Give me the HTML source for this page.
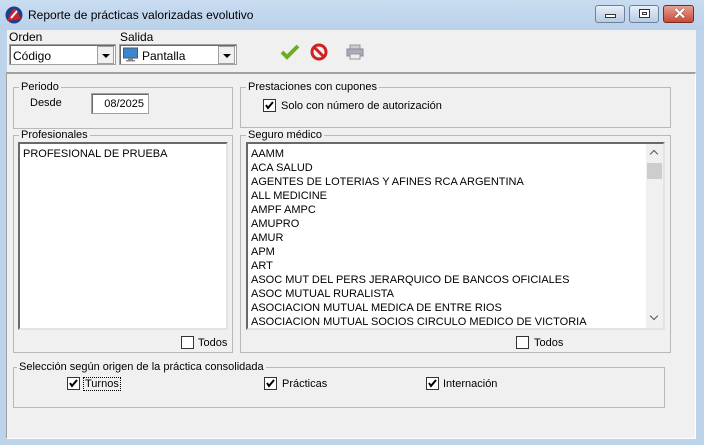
<!DOCTYPE html>
<html><head><meta charset="utf-8"><style>
*{margin:0;padding:0;box-sizing:border-box}
body{width:704px;height:445px;overflow:hidden;background:#bcd3ea;font-family:"Liberation Sans",Arial,sans-serif;font-size:11px;color:#000;position:relative}
.a{position:absolute}
.title{left:0;top:0;width:704px;height:30px;background:linear-gradient(#c9dcf0,#b9d1ea)}
.client{left:7px;top:30px;width:689px;height:408px;background:#f0f0f0}
.panel{left:6px;top:72px;width:690px;height:367px;border-top:2px solid #a0a0a0;border-left:1px solid #a0a0a0;border-bottom:1px solid #fff;border-right:1px solid #fff;background:#f0f0f0}
.grp{border:1px solid #b9b9b9}
.lbl{background:#f0f0f0;padding:0 2px;line-height:12px}
.cb{width:13px;height:13px;border:1px solid #333;background:#fff}
.list{background:#fff;border:2px solid;border-color:#696969 #e3e3e3 #e3e3e3 #696969}
.combo{background:#fff;border:1px solid #a0a0a0;box-shadow:inset 1px 1px 0 #696969}
.dd{width:17px;height:18px;background:#f0f0f0;border:1px solid #a0a0a0;top:1px;right:1px}
.dd::after{content:"";position:absolute;left:4px;top:7px;border-left:4px solid transparent;border-right:4px solid transparent;border-top:4px solid #000}
.wb{top:5px;height:18px;border:1px solid #6f819a;border-radius:3px;background:linear-gradient(#e6eef8,#b9cce3)}
.item{position:absolute;left:3px;line-height:14.1px;white-space:nowrap}
</style></head><body>
<div class="a title"></div>
<svg class="a" style="left:5px;top:6px" width="18" height="18" viewBox="0 0 18 18"><circle cx="9" cy="9" r="8.5" fill="#1c3f8f"/><path d="M2 15 L8 3 L11 3 L16 13 Z" fill="#d41f26"/><path d="M6 12 L12 5" stroke="#fff" stroke-width="2"/></svg>
<div class="a" style="left:28px;top:8px;font-size:12px">Reporte de prácticas valorizadas evolutivo</div>
<div class="a wb" style="left:595px;width:30px"><div class="a" style="left:9px;top:8px;width:11px;height:4px;background:#fff;border:1px solid #333"></div></div>
<div class="a wb" style="left:629px;width:30px"><div class="a" style="left:9px;top:3px;width:11px;height:9px;background:#fff;border:1px solid #333"><div class="a" style="left:2px;top:2px;width:5px;height:3px;border:1px solid #333"></div></div></div>
<div class="a wb" style="left:663px;width:31px;background:linear-gradient(#e8a090,#c74a36);border-color:#7a2b20"><div class="a" style="left:9px;top:-2px;color:#fff;font-size:16px;font-weight:bold;text-shadow:0 0 1px #000">✕</div></div>
<div class="a client"></div>
<div class="a" style="left:9px;top:30px;font-size:12px">Orden</div>
<div class="a combo" style="left:9px;top:44px;width:107px;height:21px"><div class="a" style="left:3px;top:4px;font-size:12px">Código</div><div class="a dd"></div></div>
<div class="a" style="left:120px;top:30px;font-size:12px">Salida</div>
<div class="a combo" style="left:119px;top:44px;width:118px;height:21px"><svg class="a" style="left:3px;top:2px" width="15" height="15"><rect x="0.5" y="1" width="14" height="10" fill="#3a86d0" stroke="#556"/><rect x="5" y="11" width="5" height="2" fill="#888"/><rect x="3" y="13" width="9" height="1.5" fill="#888"/></svg><div class="a" style="left:22px;top:4px;font-size:12px">Pantalla</div><div class="a dd"></div></div>
<svg class="a" style="left:280px;top:44px" width="20" height="16"><path d="M2 8 L7 13 L18 2" fill="none" stroke="#6ab01e" stroke-width="4"/></svg>
<svg class="a" style="left:310px;top:43px" width="18" height="18"><circle cx="9" cy="9" r="7" fill="none" stroke="#d02020" stroke-width="3"/><path d="M4 4 L14 14" stroke="#d02020" stroke-width="3"/></svg>
<svg class="a" style="left:346px;top:44px" width="18" height="16"><rect x="4" y="1" width="10" height="5" fill="#ccc" stroke="#999"/><rect x="1" y="5" width="16" height="7" fill="#aab" stroke="#889"/><rect x="4" y="10" width="10" height="5" fill="#eee" stroke="#999"/></svg>
<div class="a panel"></div>
<div class="a grp" style="left:13px;top:87px;width:220px;height:42px"></div>
<div class="a lbl" style="left:19px;top:81px">Periodo</div>
<div class="a" style="left:30px;top:97px">Desde</div>
<div class="a" style="left:91px;top:93px;width:58px;height:21px;background:#fff;border:1px solid #a0a0a0;box-shadow:inset 1px 1px 0 #696969"><div class="a" style="right:4px;top:4px">08/2025</div></div>
<div class="a grp" style="left:240px;top:87px;width:431px;height:41px"></div>
<div class="a lbl" style="left:246px;top:81px">Prestaciones con cupones</div>
<svg class="a" style="left:263px;top:99px" width="13" height="13"><rect x="0.5" y="0.5" width="12" height="12" fill="#fff" stroke="#333"/><path d="M3 6 L5 9 L10 3" fill="none" stroke="#000" stroke-width="2"/></svg>
<div class="a" style="left:281px;top:100px">Solo con número de autorización</div>
<div class="a grp" style="left:13px;top:135px;width:220px;height:218px"></div>
<div class="a lbl" style="left:19px;top:129px">Profesionales</div>
<div class="a list" style="left:18px;top:142px;width:210px;height:188px"><div class="item" style="top:3px">PROFESIONAL DE PRUEBA</div></div>
<div class="a cb" style="left:181px;top:336px"></div>
<div class="a" style="left:198px;top:337px">Todos</div>
<div class="a grp" style="left:240px;top:135px;width:431px;height:218px"></div>
<div class="a lbl" style="left:246px;top:129px">Seguro médico</div>
<div class="a list" style="left:246px;top:142px;width:419px;height:188px">
<div class="item" style="top:3px">AAMM</div>
<div class="item" style="top:17px">ACA SALUD</div>
<div class="item" style="top:31px">AGENTES DE LOTERIAS Y AFINES RCA ARGENTINA</div>
<div class="item" style="top:45px">ALL MEDICINE</div>
<div class="item" style="top:59px">AMPF AMPC</div>
<div class="item" style="top:73px">AMUPRO</div>
<div class="item" style="top:87px">AMUR</div>
<div class="item" style="top:101px">APM</div>
<div class="item" style="top:115px">ART</div>
<div class="item" style="top:129px">ASOC MUT DEL PERS JERARQUICO DE BANCOS OFICIALES</div>
<div class="item" style="top:143px">ASOC MUTUAL RURALISTA</div>
<div class="item" style="top:157px">ASOCIACION MUTUAL MEDICA DE ENTRE RIOS</div>
<div class="item" style="top:171px">ASOCIACION MUTUAL SOCIOS CIRCULO MEDICO DE VICTORIA</div>
<div class="a" style="right:0;top:0;width:17px;height:184px;background:#f0f0f0"><div class="a" style="left:5px;top:7px;width:6px;height:6px;border-left:1.5px solid #555;border-top:1.5px solid #555;transform:rotate(45deg)"></div><div class="a" style="left:5px;bottom:9px;width:6px;height:6px;border-right:1.5px solid #555;border-bottom:1.5px solid #555;transform:rotate(45deg)"></div><div class="a" style="left:1px;top:19px;width:15px;height:16px;background:#cdcdcd"></div></div>
</div>
<div class="a cb" style="left:516px;top:336px"></div>
<div class="a" style="left:534px;top:337px">Todos</div>
<div class="a grp" style="left:13px;top:367px;width:652px;height:41px"></div>
<div class="a lbl" style="left:17px;top:361px">Selección según origen de la práctica consolidada</div>
<svg class="a" style="left:67px;top:377px" width="13" height="13"><rect x="0.5" y="0.5" width="12" height="12" fill="#fff" stroke="#333"/><path d="M3 6 L5 9 L10 3" fill="none" stroke="#000" stroke-width="2"/></svg>
<div class="a" style="left:83px;top:377px;border:1px dotted #000;padding:0 1px">Turnos</div>
<svg class="a" style="left:264px;top:377px" width="13" height="13"><rect x="0.5" y="0.5" width="12" height="12" fill="#fff" stroke="#333"/><path d="M3 6 L5 9 L10 3" fill="none" stroke="#000" stroke-width="2"/></svg>
<div class="a" style="left:282px;top:378px">Prácticas</div>
<svg class="a" style="left:426px;top:377px" width="13" height="13"><rect x="0.5" y="0.5" width="12" height="12" fill="#fff" stroke="#333"/><path d="M3 6 L5 9 L10 3" fill="none" stroke="#000" stroke-width="2"/></svg>
<div class="a" style="left:443px;top:378px">Internación</div>
</body></html>
